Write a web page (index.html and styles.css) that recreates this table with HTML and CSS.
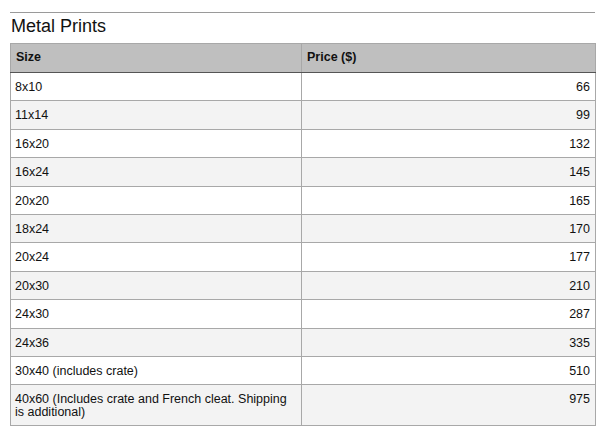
FILE: index.html
```html
<!DOCTYPE html>
<html lang="en">
<head>
<meta charset="utf-8">
<title>Metal Prints</title>
<link rel="stylesheet" href="styles.css">
</head>
<body>
<section class="prices">
  <h2 class="title">Metal Prints</h2>
  <table class="grid">
    <colgroup><col class="c1"><col class="c2"></colgroup>
    <thead>
      <tr><th>Size</th><th>Price ($)</th></tr>
    </thead>
    <tbody>
      <tr><td>8x10</td><td class="num">66</td></tr>
      <tr><td>11x14</td><td class="num">99</td></tr>
      <tr><td>16x20</td><td class="num">132</td></tr>
      <tr><td>16x24</td><td class="num">145</td></tr>
      <tr><td>20x20</td><td class="num">165</td></tr>
      <tr><td>18x24</td><td class="num">170</td></tr>
      <tr><td>20x24</td><td class="num">177</td></tr>
      <tr><td>20x30</td><td class="num">210</td></tr>
      <tr><td>24x30</td><td class="num">287</td></tr>
      <tr><td>24x36</td><td class="num">335</td></tr>
      <tr><td>30x40 (includes crate)</td><td class="num">510</td></tr>
      <tr><td>40x60 (Includes crate and French cleat. Shipping is additional)</td><td class="num">975</td></tr>
    </tbody>
  </table>
</section>
</body>
</html>
```

FILE: styles.css
```css
html, body {
  margin: 0;
  padding: 0;
  background: #ffffff;
}
body {
  font-family: "Liberation Sans", Arial, Helvetica, sans-serif;
  color: #111111;
}
.prices {
  margin: 12px 9px 0 10px;
  border-top: 1px solid #9a9a9a;
}
.title {
  margin: 2px 0 6px 1px;
  font-size: 18px;
  font-weight: normal;
  line-height: 22px;
  color: #111111;
}
.grid {
  width: 585px;
  table-layout: fixed;
  border-collapse: collapse;
  font-size: 12.5px;
  line-height: 12.7px;
}
.c1 { width: 291px; }
.c2 { width: 294px; }
.grid th,
.grid td {
  border: 1px solid #a8a8a8;
  text-align: left;
  vertical-align: top;
}
.grid th {
  background: #bfbfbf;
  font-weight: bold;
  padding: 7px 5px 8.3px 5px;
  border-bottom: 1px solid #555555;
}
.grid td {
  padding: 8px 5px 6.7px 4px;
}
.grid td.num {
  padding-right: 5px;
}
.grid tbody tr:nth-child(even) td {
  background: #f3f3f3;
}
.grid td.num {
  text-align: right;
}
```
